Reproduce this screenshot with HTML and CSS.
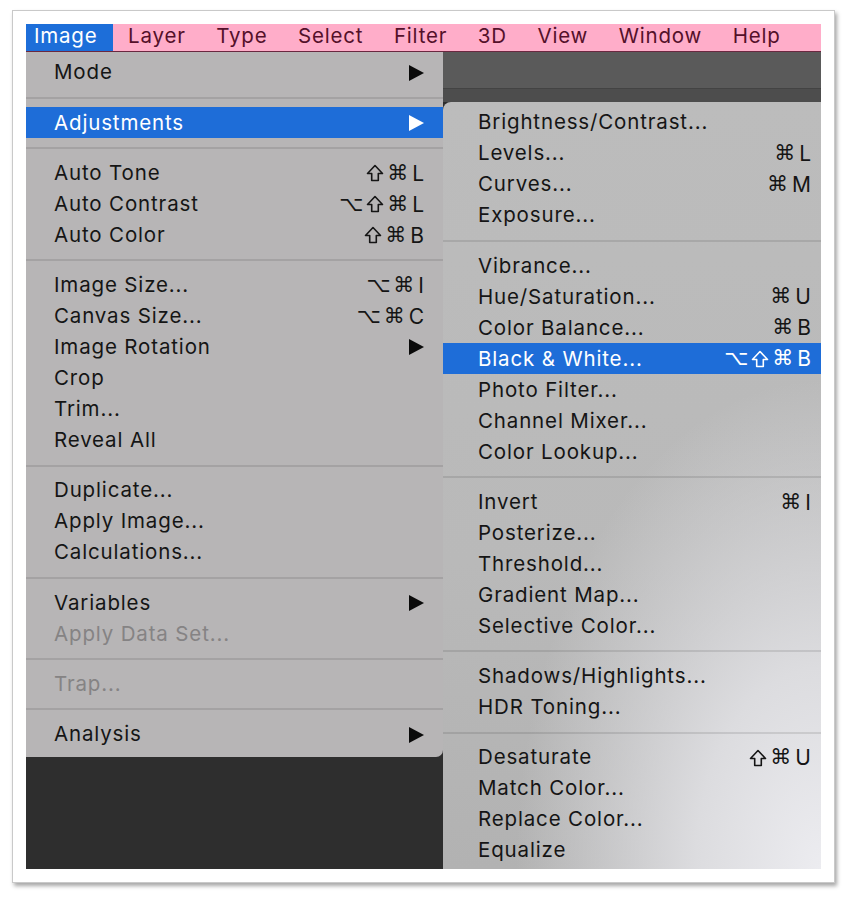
FILE: index.html
```html
<!DOCTYPE html>
<html>
<head>
<meta charset="utf-8">
<link rel="stylesheet" href="styles.css">
</head>
<body>
<div class="frame">
  <div class="screen">
    <div class="menubar">
      <span class="mb-item active first">Image</span>
      <span class="mb-item">Layer</span>
      <span class="mb-item">Type</span>
      <span class="mb-item">Select</span>
      <span class="mb-item">Filter</span>
      <span class="mb-item">3D</span>
      <span class="mb-item">View</span>
      <span class="mb-item">Window</span>
      <span class="mb-item">Help</span>
    </div>
    <div class="desk">
      <div class="left-col">
        <div class="menu main">
          <div class="row"><span>Mode</span><svg class="arr" width="15" height="16" viewBox="0 0 15 16"><polygon points="0,0 15,8 0,16"/></svg></div>
          <div class="sep"></div>
          <div class="row hl"><span>Adjustments</span><svg class="arr" width="15" height="16" viewBox="0 0 15 16"><polygon points="0,0 15,8 0,16"/></svg></div>
          <div class="sep"></div>
          <div class="row"><span>Auto Tone</span><span class="sc"><svg class="shift" width="18" height="18" viewBox="0 0 18 18"><path d="M9 1.5 L16.5 9.5 H12.3 V16.5 H5.7 V9.5 H1.5 Z"/></svg><span class="k">⌘</span><span class="k l">L</span></span></div>
          <div class="row"><span>Auto Contrast</span><span class="sc"><span class="k">⌥</span><svg class="shift" width="18" height="18" viewBox="0 0 18 18"><path d="M9 1.5 L16.5 9.5 H12.3 V16.5 H5.7 V9.5 H1.5 Z"/></svg><span class="k">⌘</span><span class="k l">L</span></span></div>
          <div class="row"><span>Auto Color</span><span class="sc"><svg class="shift" width="18" height="18" viewBox="0 0 18 18"><path d="M9 1.5 L16.5 9.5 H12.3 V16.5 H5.7 V9.5 H1.5 Z"/></svg><span class="k">⌘</span><span class="k l">B</span></span></div>
          <div class="sep"></div>
          <div class="row"><span>Image Size...</span><span class="sc"><span class="k">⌥</span><span class="k">⌘</span><span class="k l">I</span></span></div>
          <div class="row"><span>Canvas Size...</span><span class="sc"><span class="k">⌥</span><span class="k">⌘</span><span class="k l">C</span></span></div>
          <div class="row"><span>Image Rotation</span><svg class="arr" width="15" height="16" viewBox="0 0 15 16"><polygon points="0,0 15,8 0,16"/></svg></div>
          <div class="row"><span>Crop</span></div>
          <div class="row"><span>Trim...</span></div>
          <div class="row"><span>Reveal All</span></div>
          <div class="sep"></div>
          <div class="row"><span>Duplicate...</span></div>
          <div class="row"><span>Apply Image...</span></div>
          <div class="row"><span>Calculations...</span></div>
          <div class="sep"></div>
          <div class="row"><span>Variables</span><svg class="arr" width="15" height="16" viewBox="0 0 15 16"><polygon points="0,0 15,8 0,16"/></svg></div>
          <div class="row dis"><span>Apply Data Set...</span></div>
          <div class="sep"></div>
          <div class="row dis"><span>Trap...</span></div>
          <div class="sep"></div>
          <div class="row"><span>Analysis</span><svg class="arr" width="15" height="16" viewBox="0 0 15 16"><polygon points="0,0 15,8 0,16"/></svg></div>
        </div>
      </div>
      <div class="right-col">
        <div class="band">
          <div class="band-top"></div>
          <div class="band-bottom"></div>
        </div>
        <div class="menu sub">
          <div class="row"><span>Brightness/Contrast...</span></div>
          <div class="row"><span>Levels...</span><span class="sc"><span class="k">⌘</span><span class="k l">L</span></span></div>
          <div class="row"><span>Curves...</span><span class="sc"><span class="k">⌘</span><span class="k l">M</span></span></div>
          <div class="row"><span>Exposure...</span></div>
          <div class="sep"></div>
          <div class="row"><span>Vibrance...</span></div>
          <div class="row"><span>Hue/Saturation...</span><span class="sc"><span class="k">⌘</span><span class="k l">U</span></span></div>
          <div class="row"><span>Color Balance...</span><span class="sc"><span class="k">⌘</span><span class="k l">B</span></span></div>
          <div class="row hl"><span>Black &amp; White...</span><span class="sc"><span class="k">⌥</span><svg class="shift" width="18" height="18" viewBox="0 0 18 18"><path d="M9 1.5 L16.5 9.5 H12.3 V16.5 H5.7 V9.5 H1.5 Z"/></svg><span class="k">⌘</span><span class="k l">B</span></span></div>
          <div class="row"><span>Photo Filter...</span></div>
          <div class="row"><span>Channel Mixer...</span></div>
          <div class="row"><span>Color Lookup...</span></div>
          <div class="sep"></div>
          <div class="row"><span>Invert</span><span class="sc"><span class="k">⌘</span><span class="k l">I</span></span></div>
          <div class="row"><span>Posterize...</span></div>
          <div class="row"><span>Threshold...</span></div>
          <div class="row"><span>Gradient Map...</span></div>
          <div class="row"><span>Selective Color...</span></div>
          <div class="sep"></div>
          <div class="row"><span>Shadows/Highlights...</span></div>
          <div class="row"><span>HDR Toning...</span></div>
          <div class="sep"></div>
          <div class="row"><span>Desaturate</span><span class="sc"><svg class="shift" width="18" height="18" viewBox="0 0 18 18"><path d="M9 1.5 L16.5 9.5 H12.3 V16.5 H5.7 V9.5 H1.5 Z"/></svg><span class="k">⌘</span><span class="k l">U</span></span></div>
          <div class="row"><span>Match Color...</span></div>
          <div class="row"><span>Replace Color...</span></div>
          <div class="row"><span>Equalize</span></div>
        </div>
      </div>
    </div>
  </div>
</div>
</body>
</html>
```

FILE: styles.css
```css
html, body {
  margin: 0;
  padding: 0;
  background: #ffffff;
}
body {
  width: 847px;
  height: 897px;
  overflow: hidden;
  font-family: Inter, "Noto Sans", "DejaVu Sans", sans-serif;
}
.frame {
  margin: 10px 0 0 12px;
  width: 795px;
  height: 845px;
  padding: 13px;
  background: #ffffff;
  border: 1px solid #c9c9c9;
  box-shadow: 2px 3px 4px rgba(0, 0, 0, 0.35);
}
.screen {
  width: 795px;
  height: 845px;
  overflow: hidden;
  background: #2e2e2e;
  display: flex;
  flex-direction: column;
}
.menubar {
  height: 27px;
  flex: none;
  background: #ffadc9;
  border-bottom: 1px solid #6a2840;
  display: flex;
  align-items: stretch;
}
.mb-item {
  display: flex;
  align-items: center;
  padding: 0 15.3px 3px 15.3px;
  font-size: 20.5px;
  letter-spacing: 0.8px;
  color: #54102a;
  line-height: 1;
}
.mb-item.first {
  padding-left: 8px;
}
.mb-item.active {
  background: #1d6ed9;
  color: #ffffff;
}
.desk {
  flex: 1;
  display: flex;
  min-height: 0;
}
.left-col {
  width: 417px;
  flex: none;
}
.right-col {
  width: 378px;
  flex: none;
  display: flex;
  flex-direction: column;
}
.band {
  height: 50px;
  flex: none;
  display: flex;
  flex-direction: column;
}
.band-top {
  height: 36px;
  background: #5a5a5a;
  border-bottom: 1px solid #434343;
}
.band-bottom {
  flex: 1;
  background: #4d4d4d;
}
.menu {
  display: flex;
  flex-direction: column;
  color: #151515;
}
.main {
  background: #b7b5b6;
  padding: 5px 0 7px 0;
  border-bottom-right-radius: 7px;
}
.sub {
  flex: 1;
  padding: 5px 0 0 0;
  border-top-left-radius: 8px;
  background:
    radial-gradient(ellipse 95% 75% at 100% 100%, #ececf0 0%, #dcdcdf 35%, rgba(190,190,190,0) 85%),
    linear-gradient(to bottom, #bcbcbc 0%, #b9b9b9 60%, #b2b2b2 100%);
}
.row {
  height: 31px;
  flex: none;
  display: flex;
  align-items: center;
  justify-content: space-between;
  font-size: 20.5px;
  letter-spacing: 0.85px;
  line-height: 1;
  white-space: nowrap;
}
.main .row {
  padding: 0 19px 0 28px;
}
.sub .row {
  padding: 0 10px 0 35px;
}
.row.hl {
  background: #1e6dd8;
  color: #ffffff;
}
.row.dis {
  color: #858384;
}
.sep {
  height: 19.3px;
  flex: none;
  display: flex;
  align-items: center;
}
.sep::before {
  content: "";
  display: block;
  width: 100%;
  height: 2px;
  background: rgba(0, 0, 0, 0.1);
}
.arr {
  display: block;
  fill: #0a0a0a;
}
.hl .arr {
  fill: #ffffff;
}
.sc {
  display: flex;
  align-items: center;
  gap: 3px;
  letter-spacing: 0;
}
.k {
  font-family: "DejaVu Sans", sans-serif;
  font-size: 21px;
  display: block;
}
.k.l {
  font-family: Inter, sans-serif;
  font-size: 21px;
  margin-left: 1px;
}
.shift {
  display: block;
  fill: none;
  stroke: #151515;
  stroke-width: 1.6;
  stroke-linejoin: round;
}
.hl .shift {
  stroke: #ffffff;
}
```
